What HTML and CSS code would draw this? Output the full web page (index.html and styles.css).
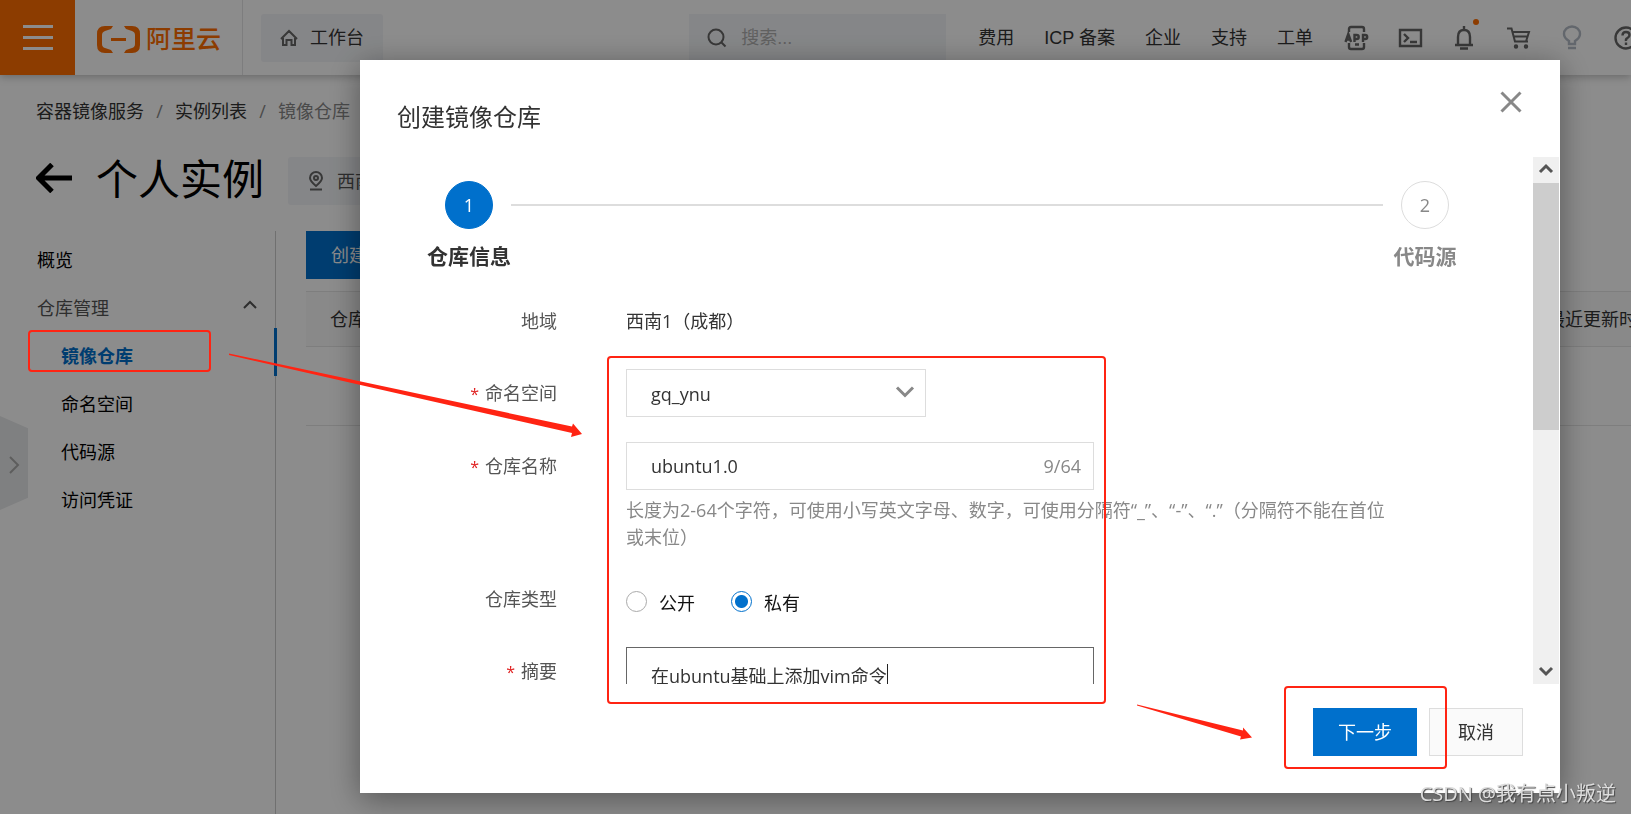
FILE: index.html
```html
<!DOCTYPE html>
<html lang="zh-CN">
<head>
<meta charset="utf-8">
<title>镜像仓库</title>
<link rel="stylesheet" href="styles.css">
</head>
<body>
<div class="page">
  <header class="topbar">
    <button class="menu-btn" type="button" aria-label="菜单"><span></span><span></span><span></span></button>
    <a class="logo" href="#">
      <svg width="43" height="27" viewBox="0 0 43 27" aria-hidden="true">
        <path fill="#ff6d00" d="M16 0H8Q0 0 0 8v11q0 8 8 8h8l-2-3-6-2q-3-1-3-4V9q0-3 3-4l6-2zM27 0h8q8 0 8 8v11q0 8-8 8h-8l2-3 6-2q3-1 3-4V9q0-3-3-4l-6-2zM14 12h15v3H14z"/>
      </svg>
      <span>阿里云</span>
    </a>
    <a class="workbench" href="#">
      <svg class="line-icon" width="18" height="18" viewBox="0 0 18 18" aria-hidden="true"><path d="M1 10 9 2l8 8M3 9v7h3.500v-5h5v5H15V9"/></svg>
      <span>工作台</span>
    </a>
    <label class="search">
      <svg class="line-icon" width="20" height="20" viewBox="0 0 20 20" aria-hidden="true"><circle cx="9" cy="9" r="7.500"/><path d="m14.500 14.500 4 4"/></svg>
      <input type="search" placeholder="搜索..." aria-label="搜索">
    </label>
    <nav class="topnav">
      <a href="#">费用</a><a href="#">ICP 备案</a><a href="#">企业</a><a href="#">支持</a><a href="#">工单</a>
      <div class="tools">
        <button type="button" aria-label="APP"><svg width="28" height="28" viewBox="0 0 28 28"><path d="M6 8V5q0-2 2-2h11q2 0 2 2v3M6 19v4q0 2 2 2h11q2 0 2-2v-4M12 20.500h4"/><path d="m2.500 18 2.800-8 2.800 8M3.500 15.500h3.500M11.500 18v-7h2.200q2 0 2 2t-2 2h-2.200M20 18v-7h2.200q2 0 2 2t-2 2H20"/></svg></button>
        <button type="button" aria-label="终端"><svg width="28" height="28" viewBox="0 0 28 28"><path d="M3 6h21v16H3zM7 10l4 4-4 4M13 18h7"/></svg></button>
        <button type="button" aria-label="消息"><svg width="28" height="28" viewBox="0 0 28 28"><path d="M13 2v3M4 21h18M9 24.500h8M7 21v-8q0-7 6-7t6 7v8"/></svg><i class="dot"></i></button>
        <button type="button" aria-label="购物车"><svg class="cart" width="28" height="28" viewBox="0 0 28 28"><path d="M2 4.500h4.500l3.500 13h13M7.500 8h16.500l-3 9.500M9 12.500h13.500"/><circle cx="11" cy="22.500" r="1.200"/><circle cx="21" cy="22.500" r="1.200"/></svg></button>
        <button type="button" class="pale" aria-label="提示"><svg width="28" height="28" viewBox="0 0 28 28"><path d="M10 20v-3q-5-3-5-7a8 7.500 0 0 1 16 0q0 4-5 7v3zM9 24h8"/></svg></button>
        <button type="button" aria-label="帮助"><svg width="28" height="28" viewBox="0 0 28 28"><circle cx="13" cy="14" r="10.500"/><path d="M9.500 11.500q0-3.500 3.500-3.500t3.500 3q0 2-2 3t-1.500 3M13 18.500v2.500"/></svg></button>
      </div>
    </nav>
  </header>

  <nav class="crumbs" aria-label="面包屑">
    <a href="#">容器镜像服务</a><i>/</i><a href="#">实例列表</a><i>/</i><span>镜像仓库</span>
  </nav>

  <div class="heading">
    <a class="back" href="#" aria-label="返回"><svg width="36" height="30" viewBox="0 0 36 30"><path d="M16 1.500 2.500 15 16 28.500M2 15h34"/></svg></a>
    <h1>个人实例</h1>
    <button class="region" type="button">
      <svg class="line-icon" width="14" height="20" viewBox="0 0 14 20" aria-hidden="true"><path d="M7 15Q1 10 1 7a6 6 0 0 1 12 0q0 3-6 8zM1 18.500h12"/><circle cx="7" cy="7" r="2"/></svg>
      <span>西南1（成都）</span>
    </button>
  </div>

  <div class="body">
    <aside class="sidebar">
      <a href="#">概览</a>
      <a class="group" href="#">仓库管理<svg width="14" height="10" viewBox="0 0 14 10" aria-hidden="true"><path d="m1 8 6-6 6 6"/></svg></a>
      <a class="sub active" href="#">镜像仓库</a>
      <a class="sub" href="#">命名空间</a>
      <a class="sub" href="#">代码源</a>
      <a class="sub" href="#">访问凭证</a>
    </aside>
    <main class="content">
      <button class="create" type="button">创建镜像仓库</button>
      <table class="repos">
        <thead><tr><th>仓库名称</th><th class="updated">最近更新时间</th></tr></thead>
        <tbody><tr><td></td><td></td></tr></tbody>
      </table>
    </main>
  </div>
  <button class="expander" type="button" aria-label="展开"><svg width="12" height="20" viewBox="0 0 12 20"><path d="m2 2 8 8-8 8"/></svg></button>
</div>

<div class="overlay">
  <section class="modal" role="dialog" aria-modal="true" aria-labelledby="dialog-title">
    <header class="modal-head">
      <h2 id="dialog-title">创建镜像仓库</h2>
      <button type="button" aria-label="关闭"><svg width="22" height="22" viewBox="0 0 22 22"><path d="m1.500 1.500 19 19m0-19-19 19"/></svg></button>
    </header>
    <div class="modal-body">
      <form class="scroll" id="repo-form">
        <div class="steps">
          <span class="circle current">1</span>
          <span class="track"></span>
          <span class="circle">2</span>
          <strong class="current-label">仓库信息</strong>
          <strong class="next-label">代码源</strong>
        </div>
        <div class="fields">
          <span class="label">地域</span>
          <span class="value">西南1（成都）</span>

          <label class="label required" for="ns">命名空间</label>
          <div class="select">
            <select id="ns"><option>gq_ynu</option></select>
            <svg width="20" height="12" viewBox="0 0 20 12" aria-hidden="true"><path d="m2 1.500 8 8 8-8"/></svg>
          </div>

          <label class="label required" for="name">仓库名称</label>
          <div>
            <div class="textbox"><input id="name" type="text" value="ubuntu1.0"><span>9/64</span></div>
            <p class="help">长度为2-64个字符，可使用小写英文字母、数字，可使用分隔符“_”、“-”、“.”（分隔符不能在首位或末位）</p>
          </div>

          <span class="label" id="kind">仓库类型</span>
          <div class="radios" role="radiogroup" aria-labelledby="kind">
            <label><input type="radio" name="kind"><span>公开</span></label>
            <label><input type="radio" name="kind" checked><span>私有</span></label>
          </div>

          <label class="label required" for="summary">摘要</label>
          <div class="summary"><textarea id="summary">在ubuntu基础上添加vim命令</textarea><i class="caret"></i></div>
        </div>
      </form>
      <div class="scrollbar" aria-hidden="true">
        <svg width="26" height="26" viewBox="0 0 26 26"><path d="m7 15 6-6 6 6"/></svg>
        <div class="rail"><div class="thumb"></div></div>
        <svg width="26" height="26" viewBox="0 0 26 26"><path d="m7 10 6 6 6-6"/></svg>
      </div>
    </div>
    <footer class="modal-foot">
      <button class="primary" type="submit" form="repo-form">下一步</button>
      <button class="plain" type="button">取消</button>
    </footer>
  </section>
</div>

<svg class="marks" width="1631" height="814" viewBox="0 0 1631 814" aria-hidden="true">
  <g fill="none" stroke="#ff2413" stroke-width="2">
    <rect x="29" y="331" width="181" height="40" rx="3"/>
    <rect x="608" y="357" width="497" height="346" rx="3"/>
    <rect x="1285" y="687" width="161" height="81" rx="3"/>
  </g>
  <g fill="#ff2413">
    <path d="m229 353.500 343 73 1-3 9 10.500-11 3 1-4-343-78z"/>
    <path d="m1137 704.500 106 26v-3l9 10-12 2 1-3-104-31z"/>
  </g>
</svg>
<div class="watermark">CSDN @我有点小叛逆</div>
</body>
</html>
```
FILE: styles.css
```css
* { box-sizing: border-box; }
html, body { height: 100%; }
body {
  margin: 0;
  overflow: hidden;
  background: #fff;
  color: #333;
  font: 400 18px/28px "Open Sans", "Noto Sans CJK SC", sans-serif;
  text-spacing-trim: space-all;
}
button, input, select, textarea { margin: 0; font: inherit; color: inherit; }
button { padding: 0; border: 0; background: none; }
a { color: inherit; text-decoration: none; }
i { font-style: normal; }
svg { display: block; flex: none; fill: none; stroke: currentColor; stroke-width: 2; }

.page { position: relative; display: flex; flex-direction: column; height: 100%; overflow: hidden; }

/* Top bar */
.topbar {
  display: flex;
  align-items: center;
  flex: none;
  height: 75px;
  box-shadow: 0 2px 8px rgba(0, 0, 0, .25);
  font-family: "Liberation Sans", "Noto Sans CJK SC", sans-serif;
}
.menu-btn {
  display: flex;
  flex-direction: column;
  align-items: center;
  justify-content: center;
  gap: 8px;
  flex: none;
  width: 75px;
  height: 75px;
  background: #ff6d00;
}
.menu-btn span { width: 30px; height: 3px; background: #fff; }
.logo {
  display: flex;
  align-items: center;
  gap: 6px;
  flex: none;
  width: 168px;
  height: 75px;
  padding: 3px 0 0 22px;
  border-right: 1px solid #e3e4e6;
  color: #ff6d00;
  font-size: 25px;
  font-weight: 500;
}
.logo svg { stroke: none; }
.workbench {
  display: flex;
  align-items: center;
  gap: 12px;
  flex: none;
  height: 48px;
  margin-left: 18px;
  padding: 0 19px;
  border-radius: 3px;
  background: #f3f5f8;
}
.line-icon { color: #666; }
.search {
  display: flex;
  align-items: center;
  gap: 14px;
  flex: none;
  width: 257px;
  height: 48px;
  margin-left: auto;
  padding-left: 18px;
  background: #f3f5f8;
}
.search input { width: 180px; padding: 0; border: 0; background: none; outline: 0; }
.search input::placeholder { color: #b0b0b0; opacity: 1; }
.topnav { display: flex; align-items: center; gap: 30px; flex: none; margin: 0 -10px 0 32px; }
.tools { display: flex; gap: 26px; color: #666; }
.tools button { position: relative; }
.tools .pale { color: #b5bcc6; }
.tools svg { stroke-width: 2.4; }
.tools .cart { stroke-width: 2; }
.dot { position: absolute; top: -5px; right: 0; width: 6px; height: 6px; border-radius: 50%; background: #ff6d00; }

/* Breadcrumb and heading */
.crumbs { display: flex; flex: none; padding: 22px 36px 0; }
.crumbs i { width: 31px; text-align: center; color: #888; }
.crumbs span { color: #888; }
.heading { display: flex; align-items: center; flex: none; height: 48px; margin-top: 32px; padding-left: 36px; color: #000; }
.back { padding-bottom: 6px; }
.back svg { stroke-width: 5; }
.heading h1 { margin: 0 24px; padding-bottom: 4px; font-size: 42px; line-height: 48px; font-weight: 400; }
.region { display: flex; align-items: center; gap: 14px; height: 48px; padding: 0 21px; border-radius: 3px; background: #f3f5f8; color: #555; }

/* Side navigation and table */
.body { display: flex; flex: 1; min-height: 0; margin-top: 26px; }
.sidebar { display: flex; flex-direction: column; flex: none; width: 276px; padding-top: 1px; border-right: 1px solid #ccc; color: #000; }
.sidebar a { display: flex; align-items: center; height: 48px; padding: 7px 0 0 37px; }
.sidebar .group { justify-content: space-between; padding-right: 18px; color: #555; }
.group svg { margin-bottom: 6px; }
.sidebar .sub { padding-left: 61px; }
.sidebar .active { margin-right: -2px; border-right: 3px solid #0070cc; color: #0070cc; font-weight: 700; }
.content { flex: 1; min-width: 0; padding-left: 30px; }
.create { display: block; height: 48px; padding: 0 25px; background: #0070cc; color: #fff; }
.repos { width: 100%; margin-top: 12px; border-collapse: collapse; table-layout: fixed; }
.repos th { height: 55px; padding: 0 0 0 24px; border: solid #e5e5e5; border-width: 1px 0; background: #fafafa; text-align: left; font-weight: 400; white-space: nowrap; }
.repos .updated { width: 108px; }
.repos td { height: 79px; border-bottom: 1px solid #e5e5e5; }
.expander {
  position: absolute;
  top: 416px;
  left: 0;
  display: flex;
  align-items: center;
  padding: 4px 0 0 8px;
  width: 28px;
  height: 94px;
  background: #e8e9eb;
  color: #aaa;
  clip-path: polygon(0 0, 100% 13%, 100% 87%, 0 100%);
}

/* Dialog */
.overlay { position: fixed; inset: 0; display: flex; padding: 60px 71px 21px 360px; background: rgba(0, 0, 0, .45); }
.modal { display: flex; flex-direction: column; flex: 1; min-width: 0; background: #fff; box-shadow: 0 6px 30px rgba(0, 0, 0, .4); }
.modal-head { display: flex; align-items: center; justify-content: space-between; flex: none; height: 97px; padding: 0 38px 0 37px; }
.modal-head h2 { margin: 16px 0 0; font-size: 24px; line-height: 34px; font-weight: 400; }
.modal-head button { margin-bottom: 13px; color: #888; }
.modal-head svg { stroke-width: 3; }
.modal-body { display: flex; flex: 1; min-height: 0; padding-right: 1px; }
.scroll { flex: 1; min-width: 0; overflow: hidden; }
.steps { display: grid; grid-template-columns: 48px 1fr 48px; align-items: center; column-gap: 18px; row-gap: 13px; padding: 24px 84px 0 85px; }
.circle { display: flex; align-items: center; justify-content: center; height: 48px; border: 1px solid #ddd; border-radius: 50%; color: #888; }
.circle.current { border-color: #0070cc; background: #0070cc; color: #fff; }
.track { height: 2px; background: #ddd; }
.steps strong { justify-self: center; white-space: nowrap; font-size: 21px; font-weight: 700; }
.next-label { grid-column: 3; color: #888; }
.fields { display: grid; grid-template-columns: 197px 1fr; column-gap: 69px; row-gap: 24px; padding: 27px 138px 0 0; line-height: 48px; }
.label { text-align: right; color: #555; }
.required::before { content: "*"; margin-right: 6px; color: #e02020; font-size: 16px; }
.select { position: relative; max-width: 300px; height: 48px; }
.select select { width: 100%; height: 48px; padding: 0 24px; border: 1px solid #ddd; border-radius: 0; background: #fff; appearance: none; }
.select svg { position: absolute; top: 17px; right: 11px; color: #888; stroke-width: 3; pointer-events: none; }
.textbox { display: flex; align-items: center; max-width: 468px; height: 48px; padding: 0 12px 0 24px; border: 1px solid #ddd; }
.textbox input { flex: 1; min-width: 0; padding: 0; border: 0; outline: 0; background: none; }
.textbox span { color: #888; }
.help { margin: 7px 0 0; line-height: 27px; color: #888; }
.radios { display: flex; gap: 36px; color: #111; }
.radios label { display: flex; align-items: center; gap: 12px; height: 48px; padding-top: 4px; }
.radios span { padding-top: 4px; }
.radios input { width: 21px; height: 21px; border: 1px solid #aaa; border-radius: 50%; background: #fff; appearance: none; }
.radios input:checked { border-color: #0070cc; background: radial-gradient(circle, #0070cc 6px, #fff 7px); }
.summary { position: relative; max-width: 468px; height: 120px; }
.summary textarea { display: block; width: 100%; height: 120px; padding: 14px 24px; border: 1px solid #666; outline: 0; resize: none; line-height: 28px; background: #fff; }
.caret { position: absolute; top: 17px; left: 261px; width: 1px; height: 24px; background: #222; }
.scrollbar { display: flex; flex-direction: column; flex: none; width: 26px; background: #f0f0f0; color: #555; }
.scrollbar svg { stroke-width: 3; }
.rail { flex: 1; }
.thumb { height: 52%; background: #cdcdcd; }
.modal-foot { display: flex; align-items: flex-start; justify-content: flex-end; gap: 12px; flex: none; height: 109px; padding: 24px 37px; }
.modal-foot button { height: 48px; padding: 0 25px; }
.primary { background: #0070cc; color: #fff; }
.modal-foot .plain { padding: 0 28px; border: 1px solid #ddd; background: #fafafa; }

/* Annotations */
.marks { position: fixed; top: 0; left: 0; stroke: none; pointer-events: none; }
.watermark { position: fixed; right: 15px; bottom: 6px; color: #ddd; font-size: 20px; font-weight: 400; text-shadow: 1px 1px 1px #444; }
```
